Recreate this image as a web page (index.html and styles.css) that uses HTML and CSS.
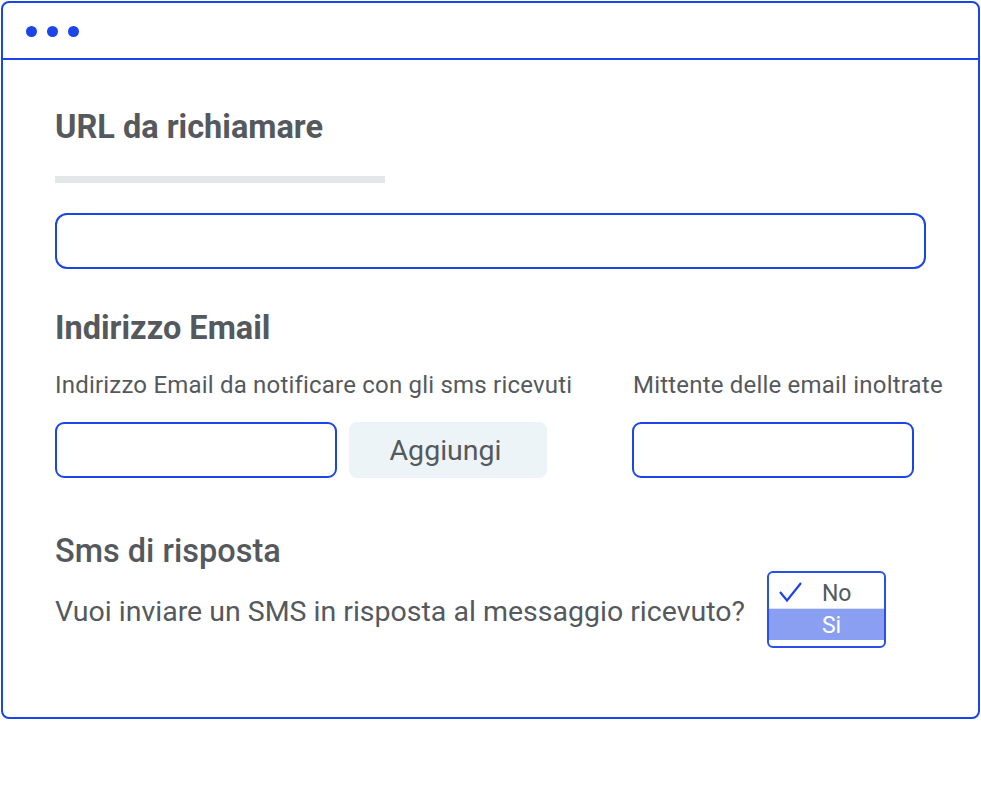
FILE: index.html
```html
<!DOCTYPE html>
<html lang="it">
<head>
<meta charset="utf-8">
<link rel="stylesheet" href="styles.css">
</head>
<body>
<div class="window">
  <div class="titlebar">
    <span class="dot"></span><span class="dot"></span><span class="dot"></span>
  </div>
  <div class="content">
    <h2 class="title t1">URL da richiamare</h2>
    <div class="bar"></div>
    <div class="input url"></div>

    <h2 class="title t2">Indirizzo Email</h2>
    <div class="email-grid">
      <div class="col">
        <div class="label">Indirizzo Email da notificare con gli sms ricevuti</div>
        <div class="field-row">
          <div class="input small"></div>
          <div class="btn">Aggiungi</div>
        </div>
      </div>
      <div class="col">
        <div class="label">Mittente delle email inoltrate</div>
        <div class="field-row">
          <div class="input small"></div>
        </div>
      </div>
    </div>

    <h2 class="title t3">Sms di risposta</h2>
    <div class="question-row">
      <span class="question">Vuoi inviare un SMS in risposta al messaggio ricevuto?</span>
      <div class="select">
        <div class="opt selected">
          <svg class="check" width="23" height="20" viewBox="0 0 23 20"><path d="M1 10 L8 18.5 L22 1" fill="none" stroke="#1b44eb" stroke-width="2.2"/></svg>
          <span>No</span>
        </div>
        <div class="opt hl"><span>Si</span></div>
      </div>
    </div>
  </div>
</div>
</body>
</html>
```

FILE: styles.css
```css
* { box-sizing: border-box; }
html, body { margin: 0; padding: 0; background: #ffffff; }
body { font-family: Roboto, "Noto Sans", Arial, sans-serif; color: #55595d; }

.window {
  margin: 1px 0 0 1px;
  width: 979px;
  height: 718px;
  border: 2px solid #1b44eb;
  border-radius: 8px;
  display: flex;
  flex-direction: column;
}

.titlebar {
  height: 57px;
  border-bottom: 2px solid #1b44eb;
  display: flex;
  align-items: center;
  gap: 10px;
  padding: 2px 0 0 23px;
}
.dot {
  width: 11px;
  height: 11px;
  border-radius: 50%;
  background: #1b44eb;
}

.content {
  padding: 48px 0 0 52px;
}

.title {
  margin: 0;
  font-size: 32.5px;
  line-height: 38px;
  font-weight: 700;
  color: #55595d;
}
.t2 { margin-top: 40px; }
.t3 { margin-top: 54px; font-weight: 500; }

.bar {
  margin-top: 30px;
  width: 330px;
  height: 7px;
  background: #e4e7e7;
}

.input {
  border: 2px solid #1b44eb;
  border-radius: 12px;
  height: 56px;
  background: #fff;
}
.input.url {
  margin-top: 30px;
  width: 871px;
}
.input.small {
  width: 282px;
  border-radius: 9px;
}

.email-grid {
  margin-top: 24px;
  display: grid;
  grid-template-columns: 577px 1fr;
}
.label {
  font-size: 24px;
  line-height: 28px;
  color: #55595d;
  letter-spacing: 0.2px;
  white-space: nowrap;
}
.col:last-child .label { padding-left: 1px; }
.field-row {
  margin-top: 23px;
  display: flex;
  gap: 12px;
}
.btn {
  width: 198px;
  height: 56px;
  border-radius: 8px;
  background: #edf4f7;
  display: flex;
  align-items: center;
  justify-content: center;
  font-size: 28.5px;
  color: #55595d;
  padding-right: 5px;
}

.question-row {
  margin-top: 1px;
  display: flex;
  align-items: center;
  gap: 22px;
}
.question {
  font-size: 28.5px;
  line-height: 33px;
  white-space: nowrap;
  padding-top: 3px;
}

.select {
  width: 119px;
  height: 77px;
  border: 2px solid #2a50ec;
  border-radius: 6px;
  padding-bottom: 6px;
  display: flex;
  flex-direction: column;
  overflow: hidden;
}
.opt {
  position: relative;
  display: flex;
  align-items: center;
  font-size: 23px;
  padding-left: 53px;
}
.opt.selected { height: 36px; color: #55595d; padding-top: 6px; border-bottom: 1px solid #dde3f5; }
.opt.hl { height: 31px; background: #8a9ff2; color: #ffffff; padding-top: 1px; }
.check {
  position: absolute;
  left: 10px;
  top: 9px;
}
```
